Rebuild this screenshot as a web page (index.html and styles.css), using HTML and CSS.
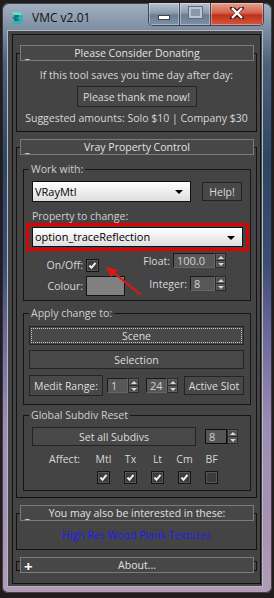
FILE: index.html
```html
<!DOCTYPE html>
<html lang="en">
<head>
    <meta charset="UTF-8">
    <title>VMC v2.01</title>
    <link rel="stylesheet" href="styles.css">
</head>
<body>
    <div class="window">
        <div class="titlebar">
            <svg class="app-icon" width="16" height="16" viewBox="0 0 16 16">
                <path d="M2 2 L11 2 L14 5 L14 11 L11 14 L2 14 L5 11 L5 9 L3 8 L5 7 L5 5 Z" fill="#2fb3b0"/>
                <path d="M5 5 L10 5 L10 7 L7 8 L10 9 L10 11 L5 11 L5 9 L3 8 L5 7 Z" fill="#137a7a"/>
                <path d="M2 2 L11 2 L14 5 L10 5 L5 5 Z" fill="#6fd6d2"/>
            </svg>
            <span class="title">VMC v2.01</span>
            <div class="caption">
                <span class="cap-btn cap-min"><i></i></span>
                <span class="cap-btn cap-max"><i></i></span>
                <span class="cap-btn cap-close">
                    <svg width="14" height="12" viewBox="0 0 14 12">
                        <path d="M2 1 L7 5 L12 1 M2 11 L7 7 L12 11 M7 5 L7 7" stroke="#3a1a18" stroke-width="4" fill="none" stroke-linecap="square"/>
                        <path d="M2 1 L12 11 M12 1 L2 11" stroke="#ffffff" stroke-width="2.4" fill="none"/>
                    </svg>
                </span>
            </div>
        </div>

        <div class="client">
            <div class="panel">

                <div class="rollout">
                    <div class="roll-head"><span class="sign">_</span>Please Consider Donating</div>
                    <div class="roll-body donate">
                        <p>If this tool saves you time day after day:</p>
                        <button class="btn thank">Please thank me now!</button>
                        <p>Suggested amounts: Solo $10 | Company $30</p>
                    </div>
                </div>

                <div class="rollout">
                    <div class="roll-head"><span class="sign">_</span>Vray Property Control</div>
                    <div class="roll-body vray">
                        <fieldset class="group work">
                            <legend>Work with:</legend>
                            <div class="work-row">
                                <div class="dropdown mtl">VRayMtl<b class="caret"></b></div>
                                <button class="btn help">Help!</button>
                            </div>
                            <div class="field-label">Property to change:</div>
                            <div class="highlight">
                                <div class="dropdown">option_traceReflection<b class="caret"></b></div>
                            </div>
                            <div class="prop-area">
                                <div class="prop-left">
                                    <div class="prop-row onoff">
                                        <span class="lbl">On/Off:</span>
                                        <span class="check on"></span>
                                    </div>
                                    <div class="prop-row colour">
                                        <span class="lbl">Colour:</span>
                                        <span class="swatch"></span>
                                    </div>
                                </div>
                                <div class="prop-right">
                                    <div class="prop-row float">
                                        <span>Float:</span>
                                        <span class="spinner"><span class="spin-field w42">100.0</span><span class="spin-arrows"><i class="up"></i><i class="down"></i></span></span>
                                    </div>
                                    <div class="prop-row integer">
                                        <span>Integer:</span>
                                        <span class="spinner"><span class="spin-field w25">8</span><span class="spin-arrows"><i class="up"></i><i class="down"></i></span></span>
                                    </div>
                                </div>
                            </div>
                        </fieldset>

                        <fieldset class="group apply">
                            <legend>Apply change to:</legend>
                            <button class="btn wide focused">Scene</button>
                            <button class="btn wide">Selection</button>
                            <div class="medit-row">
                                <button class="btn medit">Medit Range:</button>
                                <span class="spinner"><span class="spin-field w21">1</span><span class="spin-arrows"><i class="up"></i><i class="down"></i></span></span>
                                <span class="spinner"><span class="spin-field w21">24</span><span class="spin-arrows"><i class="up"></i><i class="down"></i></span></span>
                                <button class="btn slot">Active Slot</button>
                            </div>
                        </fieldset>

                        <fieldset class="group subdiv">
                            <legend>Global Subdiv Reset</legend>
                            <div class="subdiv-row">
                                <button class="btn setall">Set all Subdivs</button>
                                <span class="spinner light"><span class="spin-field w22">8</span><span class="spin-arrows"><i class="up"></i><i class="down"></i></span></span>
                            </div>
                            <div class="affect">
                                <span class="affect-lbl">Affect:</span>
                                <span>Mtl</span>
                                <span>Tx</span>
                                <span>Lt</span>
                                <span>Cm</span>
                                <span>BF</span>
                                <span></span>
                                <span class="check on"></span>
                                <span class="check on"></span>
                                <span class="check on"></span>
                                <span class="check on"></span>
                                <span class="check"></span>
                            </div>
                        </fieldset>
                    </div>
                </div>

                <div class="rollout">
                    <div class="roll-head"><span class="sign">_</span>You may also be interested in these:</div>
                    <div class="roll-body links">
                        <a href="#">High Res Wood Plank Textures</a>
                    </div>
                </div>

                <div class="rollout closed">
                    <div class="roll-head"><span class="sign plus">+</span>About...</div>
                    <div class="roll-body"></div>
                </div>

            </div>
        </div>
    </div>

    <!-- annotation arrow drawn over the screenshot -->
    <svg class="red-arrow" width="46" height="40" viewBox="0 0 46 40">
        <path d="M40 34 L14 13" stroke="#e21414" stroke-width="2.2" stroke-linecap="round"/>
        <path d="M6 7 L18 10 L11 17 Z" fill="#e21414"/>
    </svg>
</body>
</html>
```

FILE: styles.css
```css
body {
    margin: 0;
    background: #231c1c;
    font-family: "Open Sans", "DejaVu Sans", sans-serif;
    font-size: 10.5px;
    color: #d8d8d8;
}

.window {
    width: 270px;
    height: 590px;
    margin: 3px 0 0 2px;
    box-sizing: border-box;
    padding: 0 9px 6px 5px;
    display: flex;
    flex-direction: column;
    border-radius: 7px 7px 6px 6px;
    background: linear-gradient(to bottom, #a4b2c2 0px, #7d8ea2 26px, #4d6179 60px, #2e4662 160px, #3c4d72 260px, #6c6898 330px, #9c8cb4 420px, #a992b2 520px, #b39cb8 590px);
    box-shadow: inset 0 0 0 1px rgba(20, 24, 34, 0.7);
}

/* title bar */
.titlebar {
    height: 27px;
    display: flex;
    align-items: flex-start;
    margin-right: -1px;
}

.app-icon {
    margin: 7px 0 0 2px;
}

.title {
    margin: 7px 0 0 7px;
    line-height: 16px;
    font-size: 12px;
    color: #111;
}

.caption {
    margin-left: auto;
    display: flex;
    height: 22px;
    border: 1px solid #3b4554;
    border-top: none;
    border-radius: 0 0 5px 5px;
    overflow: hidden;
}

.cap-btn {
    display: flex;
    align-items: center;
    justify-content: center;
    height: 22px;
    width: 30px;
    background: linear-gradient(to bottom, #b7c3d0 0%, #8b9aad 45%, #6b7c91 55%, #7d90a6 100%);
    border-right: 1px solid #3b4554;
    box-shadow: inset 0 0 0 1px rgba(255, 255, 255, 0.35);
}

.cap-min i {
    width: 10px;
    height: 3px;
    margin-top: 6px;
    background: #fff;
    border: 1px solid #3a4656;
}

.cap-max i {
    width: 9px;
    height: 7px;
    margin-top: -3px;
    border: 2px solid #b9c4d0;
    background: #8a98a8;
    outline: 1px solid #5f6e80;
}

.cap-close {
    width: 52px;
    border-right: none;
    background: linear-gradient(to bottom, #e6a190 0%, #d4604a 45%, #c0301c 55%, #d5563e 100%);
}

.cap-close svg {
    margin-top: -3px;
}

/* client area */
.client {
    flex: 1;
    display: flex;
    background: #444;
    border: 1px solid #b3bac3;
    padding: 3px 1px 2px 4px;
}

.panel {
    flex: 1;
    border: 1px solid #121212;
    padding: 10px 3px 0 3px;
}

.rollout {
    margin-bottom: 7px;
}

.roll-head {
    position: relative;
    z-index: 1;
    height: 14px;
    margin: 0 3px 0 4px;
    border: 1px solid #7b7b7b;
    background: #474747;
    line-height: 14px;
    text-align: center;
    color: #e2e2e2;
}

.roll-head .sign {
    position: absolute;
    left: 4px;
    top: 1px;
    color: #f0f0f0;
}

.roll-head .plus {
    top: 1px;
    left: 3px;
    font-size: 15px;
    font-weight: bold;
    color: #fff;
}

.roll-body {
    margin-top: -8px;
    border: 1px solid #121212;
}

.closed .roll-body {
    margin-top: -12px;
    height: 8px;
}

.donate {
    padding: 14px 0 6px;
    display: flex;
    flex-direction: column;
    align-items: center;
    gap: 4px;
}

.donate p {
    margin: 0;
    line-height: 14px;
}

.btn {
    font-family: inherit;
    font-size: 10.5px;
    color: #dcdcdc;
    background: #484848;
    border: 1px solid #232323;
    padding: 0;
    cursor: pointer;
}

.thank {
    width: 120px;
    height: 21px;
}

.vray {
    padding: 14px 5px 6px 6px;
}

.group {
    margin: 0;
    min-width: 0;
    border: 1px solid #151515;
}

.group legend {
    padding: 0 2px;
    line-height: 14px;
    color: #cfcfcf;
}

.work {
    padding: 5px 8px 4px;
}

.work legend,
.subdiv legend {
    margin-left: -3px;
}

.work-row {
    display: flex;
    align-items: center;
    justify-content: space-between;
}

.dropdown {
    position: relative;
    height: 19px;
    line-height: 19px;
    padding-left: 2px;
    border: 1px solid #101010;
    background: linear-gradient(to bottom, #ffffff, #dedede);
    color: #000;
    font-size: 11px;
}

.mtl {
    width: 155px;
}

.caret {
    position: absolute;
    right: 7px;
    top: 8px;
    border-left: 4px solid transparent;
    border-right: 4px solid transparent;
    border-top: 4px solid #000;
}

.help {
    width: 40px;
    height: 19px;
}

.field-label {
    margin-top: 7px;
    line-height: 14px;
    color: #cfcfcf;
}

.highlight {
    margin: 0 -7px 0 -6px;
    border: 3px solid #e00000;
    padding: 1px 3px;
}

.highlight .dropdown {
    height: 18px;
    line-height: 18px;
}

.prop-area {
    display: flex;
    justify-content: space-between;
    margin-right: 16px;
}

.prop-left,
.prop-right {
    display: flex;
    flex-direction: column;
}

.prop-row {
    display: flex;
    align-items: center;
    gap: 3px;
}

.prop-right .prop-row {
    justify-content: flex-end;
}

.prop-left .lbl {
    width: 51px;
    text-align: right;
}

.onoff {
    margin-top: 7px;
}

.colour {
    margin-top: 4px;
}

.float {
    margin-top: 2px;
}

.integer {
    margin-top: 8px;
}

.check {
    box-sizing: border-box;
    width: 13px;
    height: 13px;
    border: 1px solid #151515;
    background: #3c3c3c;
    box-shadow: inset 0 0 0 1px #575757;
}

.check.on {
    background: #3c3c3c url("data:image/svg+xml,%3Csvg xmlns='http://www.w3.org/2000/svg' width='11' height='11'%3E%3Cpath d='M2.5 5.5 L4.5 7.8 L8.5 2.8' stroke='%23f2f2f2' stroke-width='2' fill='none'/%3E%3C/svg%3E") center no-repeat;
}

.swatch {
    box-sizing: border-box;
    width: 39px;
    height: 20px;
    border: 1px solid #141414;
    background: #808080;
}

.spinner {
    display: inline-flex;
    height: 15px;
}

.spin-field {
    box-sizing: border-box;
    height: 15px;
    line-height: 13px;
    padding-left: 3px;
    border: 1px solid #1a1a1a;
    border-right-color: #666;
    border-bottom-color: #666;
    background: #575757;
    color: #d0d0d0;
    font-size: 11px;
}

.light .spin-field {
    border: 1px solid #0e0e0e;
    background: #555;
}

.w42 { width: 42px; }
.w25 { width: 25px; }
.w22 { width: 22px; }
.w21 { width: 21px; }

.spin-arrows {
    display: flex;
    flex-direction: column;
    width: 11px;
}

.spin-arrows i {
    flex: 1;
    display: flex;
    align-items: center;
    justify-content: center;
    background: #4c4c4c;
    border: 1px solid #2a2a2a;
    box-shadow: inset 0 0 0 1px #5e5e5e;
}

.spin-arrows i + i {
    border-top: none;
}

.spin-arrows .up::before {
    content: "";
    border-left: 3px solid transparent;
    border-right: 3px solid transparent;
    border-bottom: 3px solid #d8d8d8;
}

.spin-arrows .down::before {
    content: "";
    border-left: 3px solid transparent;
    border-right: 3px solid transparent;
    border-top: 3px solid #d8d8d8;
}

.apply {
    margin-top: 5px;
    padding: 6px 6px 8px 5px;
    display: flex;
    flex-direction: column;
}

.apply legend {
    margin-left: 0;
}

.wide {
    height: 19px;
    width: 100%;
}

.wide + .wide {
    margin-top: 5px;
}

.focused {
    outline: 1px dotted #c8c8c8;
    outline-offset: -3px;
}

.medit-row {
    margin-top: 6px;
    display: flex;
    align-items: center;
}

.medit {
    width: 74px;
    height: 21px;
}

.medit-row .spinner {
    margin-left: 4px;
}

.medit-row .spinner + .spinner {
    margin-left: 7px;
}

.slot {
    margin-left: auto;
    width: 60px;
    height: 19px;
}

.subdiv {
    margin-top: 3px;
    padding: 5px 8px 6px;
}

.subdiv-row {
    display: flex;
    align-items: center;
}

.setall {
    width: 164px;
    height: 19px;
}

.subdiv-row .spinner {
    margin-left: 9px;
}

.affect {
    display: grid;
    grid-template-columns: 58px repeat(5, 27px);
    row-gap: 5px;
    margin-top: 6px;
    line-height: 14px;
    justify-items: center;
}

.affect .affect-lbl {
    justify-self: start;
    padding-left: 17px;
}

.links {
    padding: 14px 0 7px;
    text-align: center;
    line-height: 14px;
}

.links a {
    color: #1a1aff;
    text-decoration: none;
}

/* annotation */
.red-arrow {
    position: absolute;
    left: 100px;
    top: 260px;
}
```
